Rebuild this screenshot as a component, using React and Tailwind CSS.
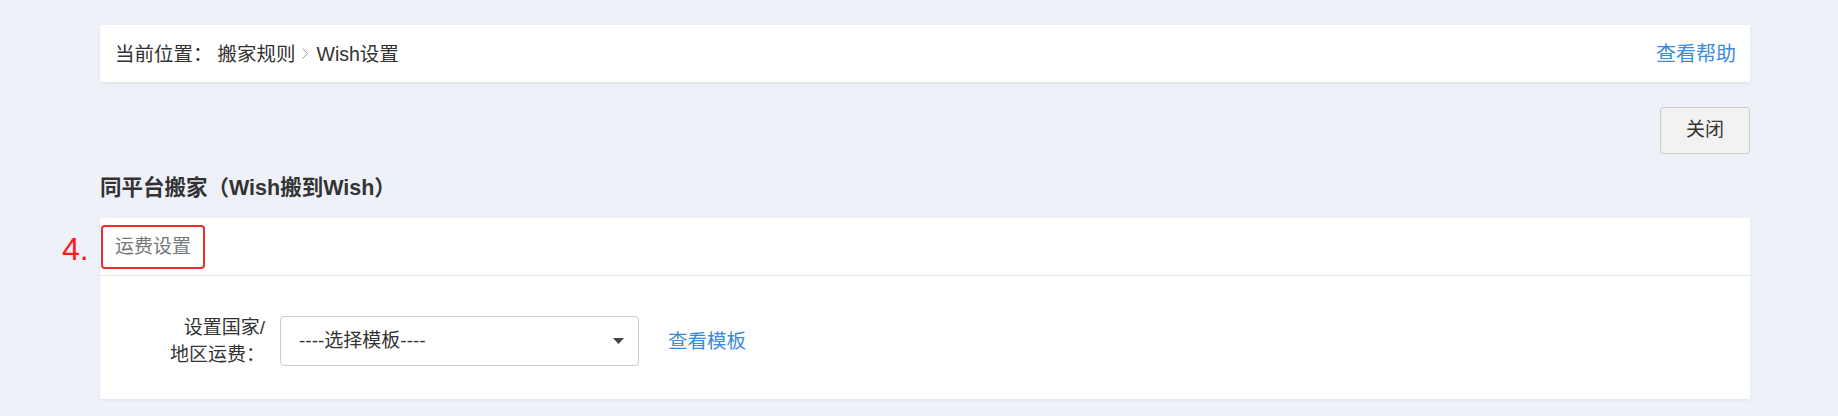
import React, { useState } from 'react';

const Chevron = () => (
  <svg width="6" height="11" viewBox="0 0 6 11" className="ml-[6px] mr-[9px]">
    <polyline points="0.5,0.5 5.5,5.5 0.5,10.5" fill="none" stroke="#999" strokeWidth="1" />
  </svg>
);

const App = () => {
  const [template, setTemplate] = useState('');

  return (
    <div className="min-h-screen bg-[#eef1f8] pt-[25px] pl-[100px] pr-[88px] font-['Liberation_Sans','Noto_Sans_CJK_SC',sans-serif] text-[#333]">
      {/* Breadcrumb */}
      <div className="h-[57px] bg-white flex items-center justify-between pl-[15px] pr-[14px] shadow-[0_1px_3px_rgba(0,0,0,0.08)]">
        <div className="flex items-center text-[19.5px] leading-[26px]">
          <span>当前位置：</span>
          <span className="ml-[5px]">搬家规则</span>
          <Chevron />
          <span>Wish设置</span>
        </div>
        <a href="#" className="text-[20px] leading-[26px] text-[#3b8ad9]">查看帮助</a>
      </div>

      {/* Close */}
      <div className="flex justify-end mt-[25px]">
        <button className="w-[90px] h-[47px] bg-[#f2f2f2] border border-[#cccccc] rounded-[3px] text-[19px] text-[#333]">
          关闭
        </button>
      </div>

      <h2 className="mt-[21px] text-[21.5px] leading-[26px] font-bold text-[#333]">同平台搬家（Wish搬到Wish）</h2>

      {/* Shipping card */}
      <div className="relative mt-[17px] bg-white shadow-[0_1px_3px_rgba(0,0,0,0.06)]">
        <span className="absolute left-[-38px] top-[13px] text-[32px] leading-[36px] text-[#ff1a1a]">4.</span>
        <div className="h-[58px] flex items-center pl-[1px] border-b border-[#e6e6e6]">
          <span className="border-2 border-[#f02b2b] rounded-[4px] px-[12px] py-[7px] text-[19px] leading-[26px] text-[#777]">
            运费设置
          </span>
        </div>
        <div className="flex items-center pl-[65px] pt-[38px] pb-[31px]">
          <div className="w-[100px] text-right text-[19px] leading-[27px] text-[#333]">
            设置国家/
            <br />
            地区运费：
          </div>
          <div className="relative ml-[15px] w-[359px] h-[50px]">
            <select
              value={template}
              onChange={(e) => setTemplate(e.target.value)}
              className="appearance-none w-full h-full border border-[#cccccc] rounded-[4px] bg-white pl-[18px] text-[19px] text-[#333] outline-none"
            >
              <option value="">----选择模板----</option>
              <option value="1">默认模板</option>
            </select>
            <svg width="11" height="6" viewBox="0 0 11 6" className="pointer-events-none absolute right-[15px] top-[22px]">
              <polygon points="0,0 11,0 5.5,6" fill="#444" />
            </svg>
          </div>
          <a href="#" className="ml-[29px] text-[19.5px] leading-[26px] text-[#3b8ad9]">查看模板</a>
        </div>
      </div>
    </div>
  );
};

export default App;
